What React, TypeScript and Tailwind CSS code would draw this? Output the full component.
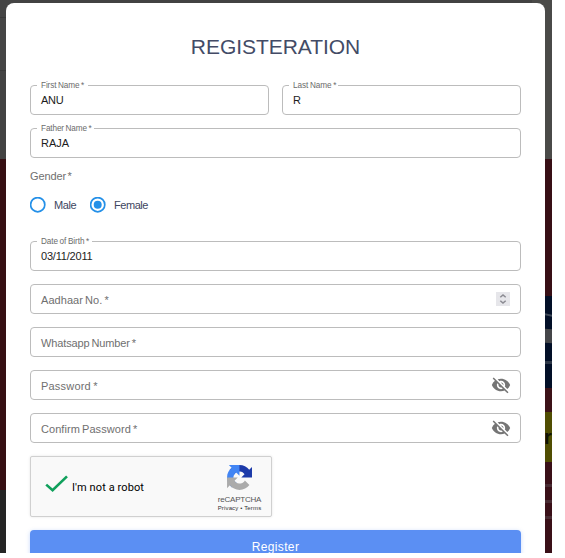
import React from "react";
import { MdVisibilityOff } from "react-icons/md";

interface FieldProps {
  label: string;
  value?: string;
  labelClass?: string;
  textClass?: string;
  children?: React.ReactNode;
}

const Field: React.FC<FieldProps> = ({
  label,
  value,
  labelClass = "",
  textClass = "",
  children,
}) => (
  <div className="relative flex h-[30px] w-full items-center justify-between rounded-[4px] border border-[#bcbcbc] pl-2.5 pr-2.5">
    {value ? (
      <>
        <label
          className={`absolute -top-[6px] left-[6px] whitespace-nowrap bg-white pl-1 text-[8.2px] leading-[11px] text-[#6b6b6b] [word-spacing:-0.6px] ${labelClass}`}
        >
          {label}
        </label>
        <span className={`text-[11px] leading-[14px] text-[#1c1c1c] ${textClass}`}>
          {value}
        </span>
      </>
    ) : (
      <span className={`pt-[2px] text-[11px] leading-[14px] text-[#6f6f6f] [word-spacing:-1px] ${textClass}`}>
        {label}
      </span>
    )}
    {children}
  </div>
);

const Radio: React.FC<{ label: string; checked?: boolean; textClass?: string }> = ({
  label,
  checked,
  textClass = "",
}) => (
  <div className="flex items-center gap-[8px]">
    <svg viewBox="0 0 16 16" className="size-4" fill="none">
      <circle cx="7.7" cy="7.7" r="7.1" stroke="#2490e8" strokeWidth="1.7" />
      {checked && <circle cx="7.700" cy="7.700" r="4" fill="#2490e8" />}
    </svg>
    <span className={`text-[11px] leading-4 text-[#3e4660] ${textClass}`}>{label}</span>
  </div>
);

const Stepper: React.FC = () => (
  <span className="flex h-[14px] w-[14px] items-center justify-center bg-[#e6e6ea]">
    <svg viewBox="0 0 14 14" className="size-[14px]" fill="none" stroke="#8b8b92" strokeWidth="1.5">
      <path d="M4.300 5.300 7 2.900l2.700 2.400M4.300 8.700 7 11.100l2.700-2.400" />
    </svg>
  </span>
);

const RecaptchaLogo: React.FC = () => (
  <svg viewBox="0 0 64 64" className="size-[25px]">
    <path
      fill="#1c3aa9"
      d="M64 32l-.03-1.4V4.8l-7.1 7.1C51 4.7 42.1.1 32.1.1 21.700.1 12.500 5.1 6.700 12.800l11.700 11.800c1.100-2.100 2.700-3.900 4.600-5.300 2-1.600 4.900-2.900 8.900-2.900.5 0 .9.100 1.200.100 5 .4 9.300 3.100 11.800 7.100L36.600 31.900 64 32"
    />
    <path
      fill="#4285f4"
      d="M31.900.1l-1.400.03H4.800l7.100 7.100C4.700 13.100.1 22 .1 32c0 10.400 5 19.600 12.700 25.400l11.800-11.700c-2.100-1.100-3.900-2.700-5.300-4.600-1.600-2-2.900-4.900-2.900-8.900 0-.5.100-.9.100-1.200.4-5 3.100-9.300 7.100-11.800l8.300 8.300L31.900.1"
    />
    <path
      fill="#ababab"
      d="M.1 32.100l.03 1.400v25.700l7.100-7.100C13.100 59.300 22 63.900 32 63.900c10.400 0 19.600-5 25.400-12.700L45.700 39.400c-1.100 2.100-2.700 3.900-4.600 5.300-2 1.600-4.900 2.900-8.900 2.900-.5 0-.9-.1-1.200-.1-5-.4-9.300-3.100-11.800-7.100l8.300-8.300L.1 32.100"
    />
  </svg>
);

const Recaptcha: React.FC = () => (
  <div className="flex h-[61px] w-[242px] justify-between rounded-[2px] border border-[#d0d0d0] bg-[#f9f9f9] pl-[14px] pr-[9px] shadow-[0_0_3px_rgba(0,0,0,0.1)]">
    <div className="flex items-start gap-[4px]">
      <svg viewBox="0 0 23 18" className="mt-[18px] h-[18px] w-[23px]" fill="none" stroke="#10a05c" strokeWidth="2.6">
        <path d="M1.200 9.600 7.600 15.300 22 1.400" />
      </svg>
      <span className="mt-[24px] font-[Roboto,sans-serif] text-[11px] leading-[14px] tracking-[0.1px] text-black">
        I'm not a robot
      </span>
    </div>
    <div className="flex w-[45px] flex-col items-center pt-[8px] text-[#555555]">
      <RecaptchaLogo />
      <span className="mt-[5px] text-[8px] leading-[10px] tracking-[-0.2px] whitespace-nowrap">
        reCAPTCHA
      </span>
      <span className="-mt-px text-[6px] leading-[8px] tracking-[0.15px] whitespace-nowrap text-[#333333]">
        Privacy • Terms
      </span>
    </div>
  </div>
);

// Darkened page showing around the modal
const Backdrop: React.FC = () => (
  <div className="col-start-1 row-start-1 flex justify-between bg-[#424242]">
    <div className="flex w-[20px] flex-col">
      <div className="h-[18px] border-b border-[#3a3a3a] bg-[#454545]" />
      <div className="h-[53px] border-b border-[#3a3a3a] bg-[#454545]" />
      <div className="h-[88px] bg-[#434343]" />
      <div className="h-[331px] bg-[#360f13]" />
      <div className="flex-1 bg-[#252525]" />
    </div>
    <div className="flex w-[20px] flex-col items-stretch">
      <div className="h-[159px] bg-[#4a4a48]" />
      <div className="h-[137px] bg-[#380f15]" />
      <div className="flex h-[92px] flex-col bg-[#020f27] pl-[13px]">
        <div className="mt-[18px] h-[2px] skew-y-12 bg-[#3e4857]" />
        <div className="mt-[13px] h-[14px] skew-y-3 bg-[#454649]" />
        <div className="mt-[18px] h-[3px] bg-[#2c3646]" />
      </div>
      <div className="h-[24px] bg-[#3c1218]" />
      <div className="flex h-[50px] items-center overflow-hidden bg-[#504d02] pl-[12px]">
        <span className="font-['Liberation_Sans',Arial,sans-serif] text-[20px] font-bold leading-none text-[#111204]">
          r
        </span>
      </div>
      <div className="flex flex-1 flex-col gap-[13px] bg-[#3a1018] pt-[22px]">
        <div className="h-[3px] bg-[#482b32]" />
        <div className="h-[3px] bg-[#482b32]" />
        <div className="h-[3px] bg-[#482b32]" />
      </div>
    </div>
  </div>
);

const App: React.FC = () => {
  return (
    <div className="h-[558px] w-[565px] bg-white font-['Liberation_Sans',Arial,sans-serif]">
      <div className="grid h-[553px] w-[552px] grid-cols-1 grid-rows-1 overflow-hidden">
        <Backdrop />
        <div className="z-10 col-start-1 row-start-1 ml-[6px] mr-[7px] mt-[3px] flex flex-col rounded-t-[8px] bg-white px-6">
          <h1 className="mt-[31px] text-center text-[21px] leading-[26px] tracking-[-0.05px] text-[#434b66]">
            REGISTERATION
          </h1>
          <div className="mt-[25px] flex flex-col gap-[13px]">
            <div className="flex gap-[13px]">
              <Field label="First Name *" value="ANU" textClass="tracking-[-0.3px]" labelClass="w-[51px] tracking-[-0.1px]" />
              <Field label="Last Name *" value="R" labelClass="w-[49px] tracking-[-0.05px]" />
            </div>
            <Field label="Father Name *" value="RAJA" labelClass="w-[57px] tracking-[-0.12px]" />
          </div>
          <div className="mt-[10px] text-[11px] leading-4 tracking-[-0.1px] text-[#6f6f6f] [word-spacing:-1.5px]">
            Gender *
          </div>
          <div className="mt-[13px] flex gap-[13px]">
            <Radio label="Male" textClass="w-[23px] tracking-[-0.4px]" />
            <Radio label="Female" checked textClass="tracking-[-0.45px]" />
          </div>
          <div className="mt-[28px] flex flex-col gap-[13px]">
            <Field
              label="Date of Birth *"
              value="03/11/2011"
              textClass="tracking-[-0.2px]"
              labelClass="w-[55px] tracking-[-0.07px]"
            />
            <Field label="Aadhaar No. *" textClass="tracking-[0.05px]">
              <Stepper />
            </Field>
            <Field label="Whatsapp Number *" textClass="tracking-[-0.12px]" />
            <Field label="Password *" textClass="tracking-[0.2px]">
              <MdVisibilityOff className="-mr-px size-5 text-[#757575]" />
            </Field>
            <Field label="Confirm Password *" textClass="tracking-[0.06px]">
              <MdVisibilityOff className="-mr-px size-5 text-[#757575]" />
            </Field>
            <Recaptcha />
          </div>
          <button className="mt-[13px] h-[34px] shrink-0 rounded-[4px] bg-[#5b8ff3] text-[12px] leading-[34px] tracking-[0.35px] text-white shadow-[0_1px_4px_rgba(91,143,243,0.35)]">
            Register
          </button>
        </div>
      </div>
    </div>
  );
};

export default App;
